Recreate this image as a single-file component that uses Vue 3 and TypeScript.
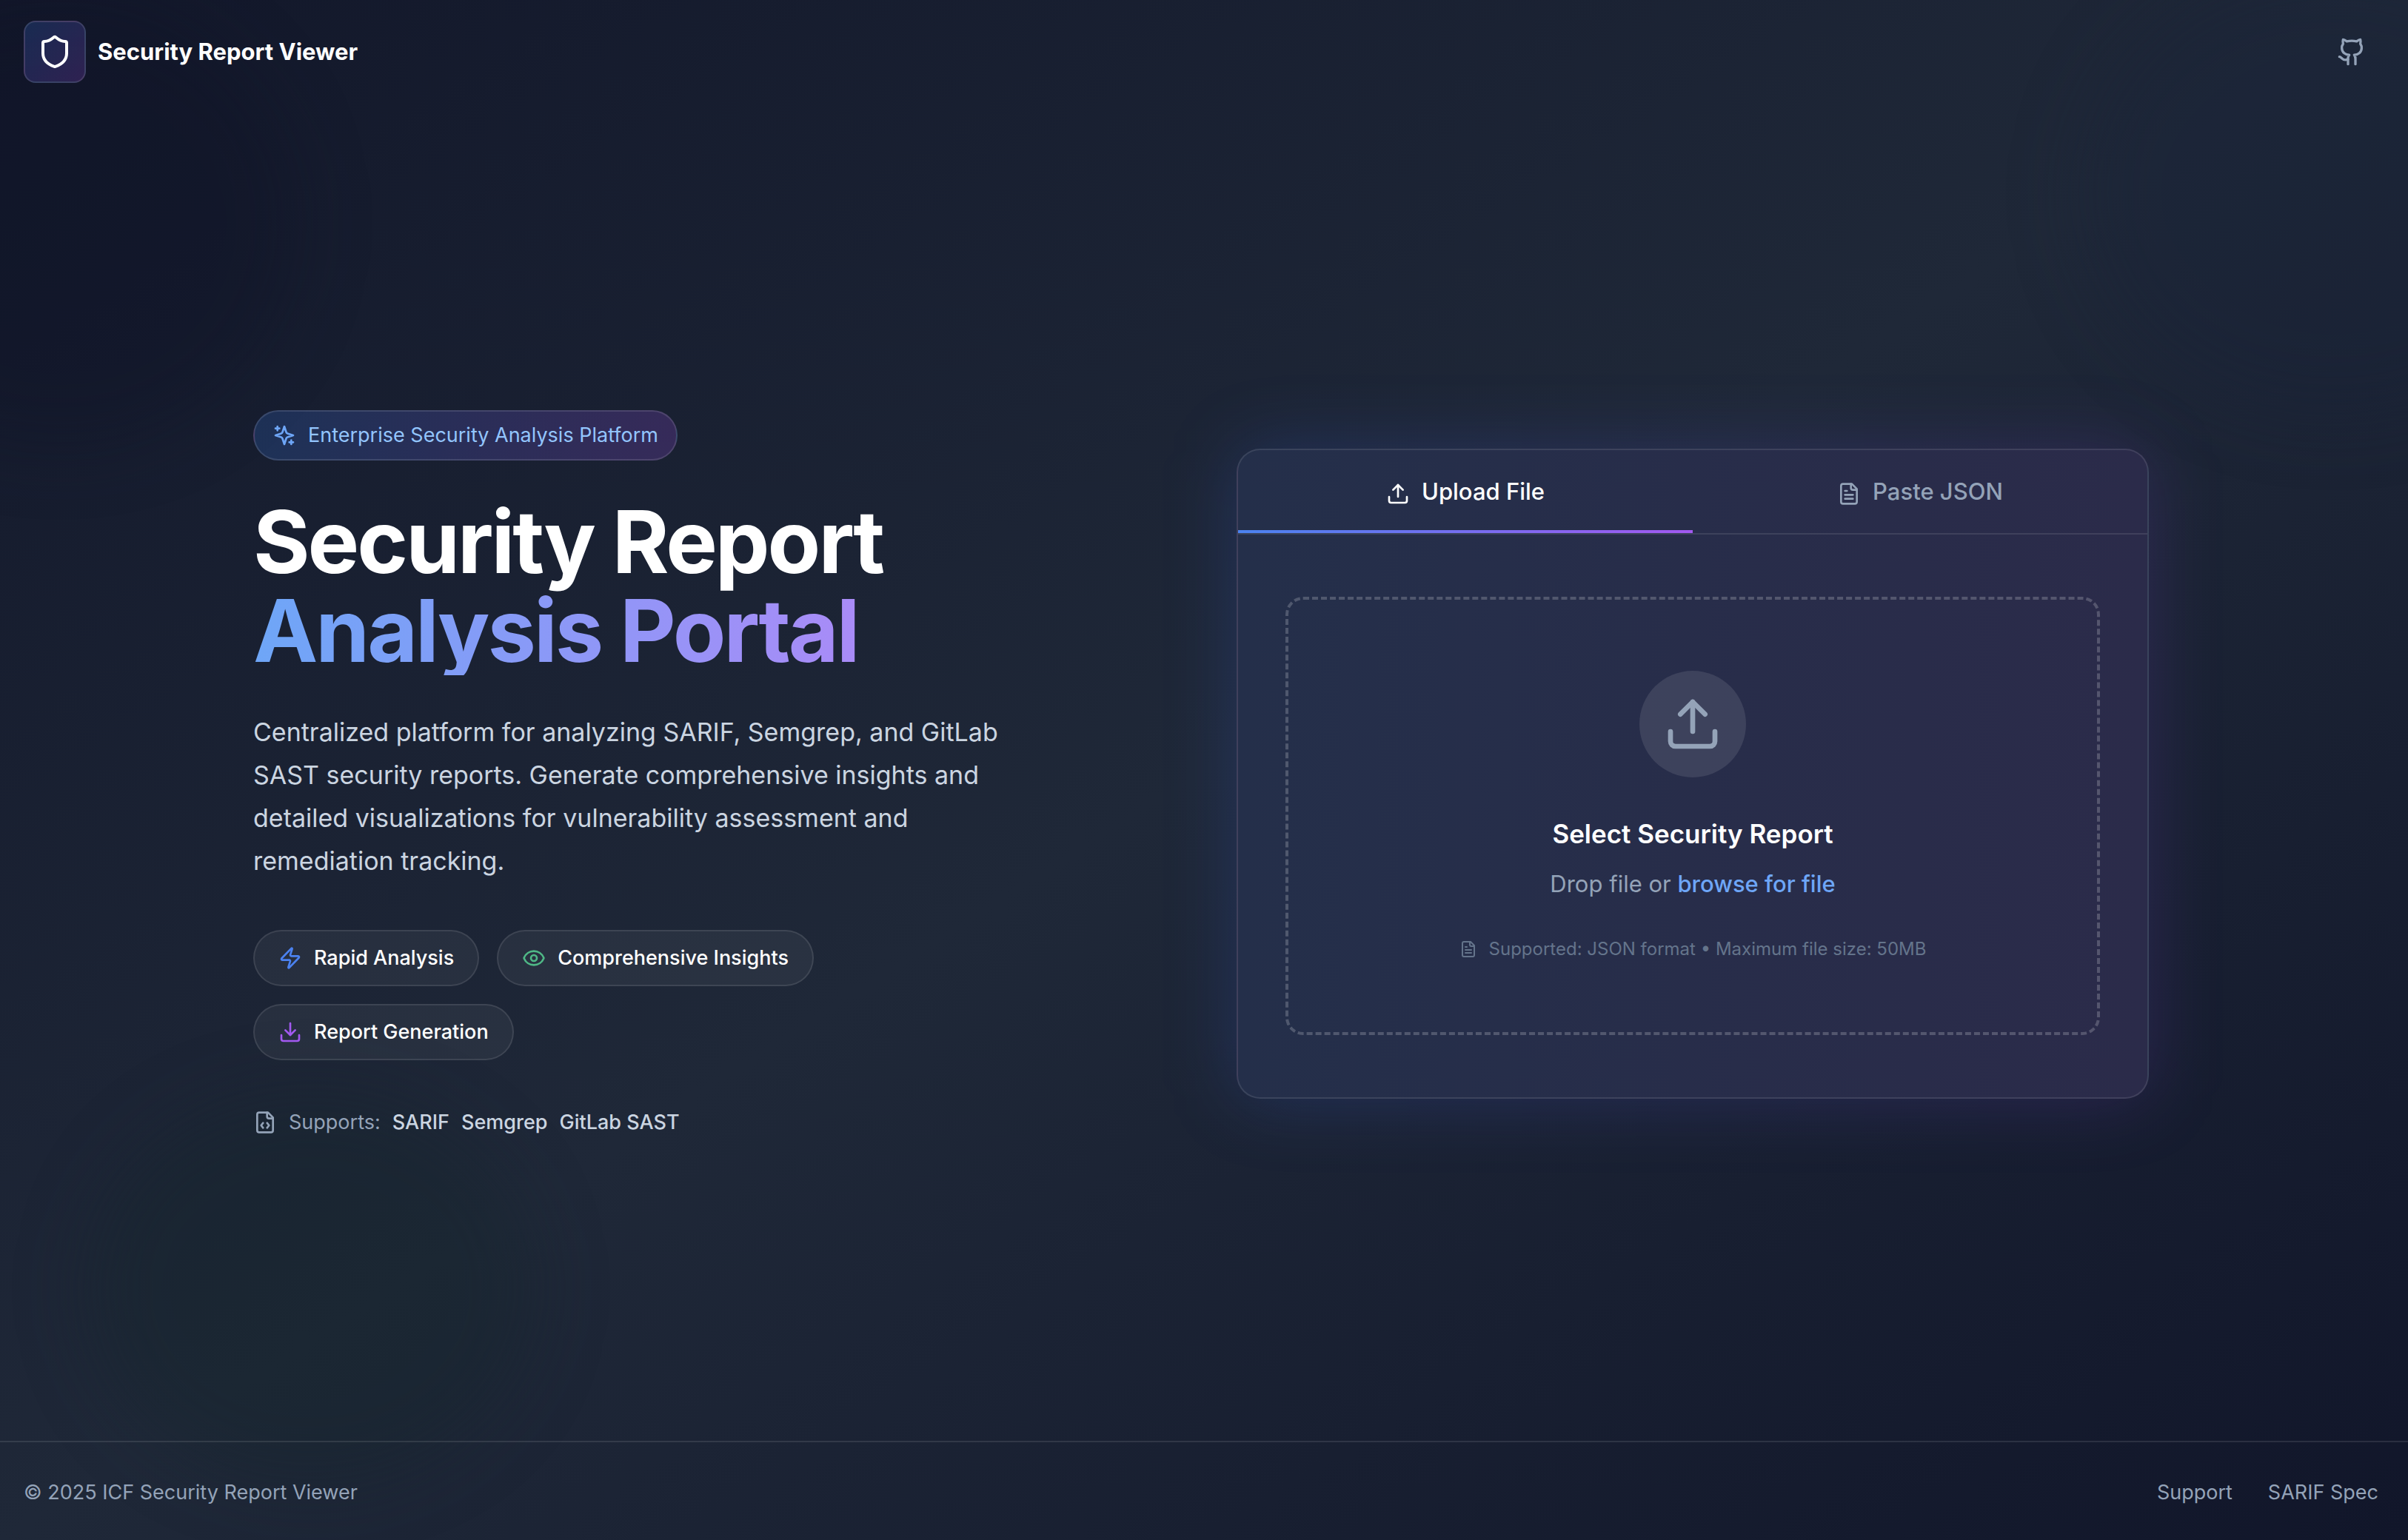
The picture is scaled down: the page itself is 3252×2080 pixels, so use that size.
<script setup lang="ts">
import { ref } from 'vue'

type TabId = 'upload' | 'paste'

interface Tab {
  id: TabId
  label: string
  icon: string[]
}

interface Feature {
  label: string
  tone: string
  icon: string[]
}

const uploadIcon = ['M12 3v12', 'm17 8-5-5-5 5', 'M21 15v4a2 2 0 0 1-2 2H5a2 2 0 0 1-2-2v-4']
const fileTextIcon = [
  'M15 2H6a2 2 0 0 0-2 2v16a2 2 0 0 0 2 2h12a2 2 0 0 0 2-2V7Z',
  'M14 2v4a2 2 0 0 0 2 2h4',
  'M10 9H8',
  'M16 13H8',
  'M16 17H8',
]

const tabs: Tab[] = [
  { id: 'upload', label: 'Upload File', icon: uploadIcon },
  { id: 'paste', label: 'Paste JSON', icon: fileTextIcon },
]

const features: Feature[] = [
  {
    label: 'Rapid Analysis',
    tone: 'blue',
    icon: [
      'M4 14a1 1 0 0 1-.78-1.63l9.9-10.2a.5.5 0 0 1 .86.46l-1.92 6.02A1 1 0 0 0 13 10h7a1 1 0 0 1 .78 1.63l-9.9 10.2a.5.5 0 0 1-.86-.46l1.92-6.02A1 1 0 0 0 11 14z',
    ],
  },
  {
    label: 'Comprehensive Insights',
    tone: 'green',
    icon: [
      'M2.062 12.348a1 1 0 0 1 0-.696 10.75 10.75 0 0 1 19.876 0 1 1 0 0 1 0 .696 10.75 10.75 0 0 1-19.876 0',
      'M15 12a3 3 0 1 1-6 0 3 3 0 0 1 6 0Z',
    ],
  },
  {
    label: 'Report Generation',
    tone: 'purple',
    icon: ['M12 15V3', 'm7 10 5 5 5-5', 'M21 15v4a2 2 0 0 1-2 2H5a2 2 0 0 1-2-2v-4'],
  },
]

const formats: string[] = ['SARIF', 'Semgrep', 'GitLab SAST']

const activeTab = ref<TabId>('upload')
</script>

<template>
  <div class="page">
    <div class="orb orb-navy"></div>
    <div class="orb orb-blue"></div>
    <div class="orb orb-green"></div>

    <header class="header">
      <div class="brand">
        <span class="brand-mark">
          <svg class="icon icon-lg" viewBox="0 0 24 24" aria-hidden="true">
            <path d="M20 13c0 5-3.5 7.5-7.66 8.95a1 1 0 0 1-.67-.01C7.5 20.5 4 18 4 13V6a1 1 0 0 1 1-1c2 0 4.5-1.2 6.24-2.72a1.17 1.17 0 0 1 1.52 0C14.51 3.81 17 5 19 5a1 1 0 0 1 1 1z" />
          </svg>
        </span>
        <span class="brand-name">Security Report Viewer</span>
      </div>
      <a class="repo-link" href="#" aria-label="GitHub">
        <svg class="icon icon-md" viewBox="0 0 24 24" aria-hidden="true">
          <path d="M15 22v-4a4.8 4.8 0 0 0-1-3.5c3 0 6-2 6-5.5.08-1.25-.27-2.48-1-3.5.28-1.15.28-2.35 0-3.5 0 0-1 0-3 1.5-2.64-.5-5.36-.5-8 0C6 2 5 2 5 2c-.3 1.15-.3 2.35 0 3.5A5.403 5.403 0 0 0 4 9c0 3.5 3 5.5 6 5.5-.39.49-.68 1.05-.85 1.65-.17.6-.22 1.23-.15 1.85v4" />
          <path d="M9 18c-4.51 2-5-2-7-2" />
        </svg>
      </a>
    </header>

    <main class="main">
      <div class="columns">
        <section class="intro">
          <div class="badge">
            <svg class="icon badge-icon" viewBox="0 0 24 24" aria-hidden="true">
              <path d="m12 3-1.912 5.813a2 2 0 0 1-1.275 1.275L3 12l5.813 1.912a2 2 0 0 1 1.275 1.275L12 21l1.912-5.813a2 2 0 0 1 1.275-1.275L21 12l-5.813-1.912a2 2 0 0 1-1.275-1.275L12 3Z" />
              <path d="M5 3v4M19 17v4M3 5h4M17 19h4" />
            </svg>
            <span>Enterprise Security Analysis Platform</span>
          </div>

          <h1 class="title">
            Security Report
            <span class="title-accent">Analysis Portal</span>
          </h1>

          <p class="lead">
            Centralized platform for analyzing SARIF, Semgrep, and GitLab SAST security reports.
            Generate comprehensive insights and detailed visualizations for vulnerability
            assessment and remediation tracking.
          </p>

          <ul class="features">
            <li v-for="feature in features" :key="feature.label" class="feature">
              <svg class="icon" :class="feature.tone" viewBox="0 0 24 24" aria-hidden="true">
                <path v-for="d in feature.icon" :key="d" :d="d" />
              </svg>
              <span>{{ feature.label }}</span>
            </li>
          </ul>

          <div class="supports">
            <svg class="icon" viewBox="0 0 24 24" aria-hidden="true">
              <path d="M10 12.5 8 15l2 2.5" />
              <path d="m14 12.5 2 2.5-2 2.5" />
              <path d="M14 2v4a2 2 0 0 0 2 2h4" />
              <path d="M15 2H6a2 2 0 0 0-2 2v16a2 2 0 0 0 2 2h12a2 2 0 0 0 2-2V7z" />
            </svg>
            <span>Supports:</span>
            <span v-for="format in formats" :key="format" class="format">{{ format }}</span>
          </div>
        </section>

        <section class="panel">
          <div class="panel-glow"></div>
          <div class="card">
            <div class="tabs" role="tablist">
              <button
                v-for="tab in tabs"
                :key="tab.id"
                type="button"
                role="tab"
                class="tab"
                :class="{ active: activeTab === tab.id }"
                :aria-selected="activeTab === tab.id"
                @click="activeTab = tab.id"
              >
                <svg class="icon tab-icon" viewBox="0 0 24 24" aria-hidden="true">
                  <path v-for="d in tab.icon" :key="d" :d="d" />
                </svg>
                <span>{{ tab.label }}</span>
              </button>
            </div>

            <div class="card-body">
              <div class="dropzone">
                <div class="drop-mark">
                  <svg class="icon icon-xl" viewBox="0 0 24 24" aria-hidden="true">
                    <path v-for="d in uploadIcon" :key="d" :d="d" />
                  </svg>
                </div>
                <h2 class="drop-title">Select Security Report</h2>
                <p class="drop-text">
                  Drop file or <label class="browse" for="report-file">browse for file</label>
                </p>
                <input id="report-file" class="file-input" type="file" accept=".json" />
                <p class="drop-hint">
                  <svg class="icon icon-sm" viewBox="0 0 24 24" aria-hidden="true">
                    <path v-for="d in fileTextIcon" :key="d" :d="d" />
                  </svg>
                  <span>Supported: JSON format • Maximum file size: 50MB</span>
                </p>
              </div>
            </div>
          </div>
        </section>
      </div>
    </main>

    <footer class="footer">
      <span>© 2025 ICF Security Report Viewer</span>
      <nav class="footer-links">
        <a href="#">Support</a>
        <a href="#">SARIF Spec</a>
      </nav>
    </footer>
  </div>
</template>

<style>
body {
  margin: 0;
  background: #111827;
}
</style>

<style scoped>
.page {
  position: relative;
  display: flex;
  flex-direction: column;
  min-height: 100vh;
  overflow: hidden;
  background: linear-gradient(to bottom right, #12172a, #1f2838, #11162a);
  color: #ffffff;
  font-family: Inter, "Liberation Sans", sans-serif;
  font-size: 27px;
  line-height: 40px;
}

.page *,
.page *::after {
  box-sizing: border-box;
}

.icon {
  width: 32px;
  height: 32px;
  flex: none;
  fill: none;
  stroke: currentColor;
  stroke-width: 2;
  stroke-linecap: round;
  stroke-linejoin: round;
}

.icon-sm {
  width: 24px;
  height: 24px;
}

.icon-md {
  width: 40px;
  height: 40px;
}

.icon-lg {
  width: 48px;
  height: 48px;
}

.icon-xl {
  width: 80px;
  height: 80px;
}

/* Soft coloured circles behind the content */
.orb {
  position: absolute;
  border-radius: 50%;
  filter: blur(48px);
}

.orb-navy {
  top: 0;
  left: -240px;
  width: 640px;
  height: 600px;
  background: rgba(12, 18, 38, 0.3);
}

.orb-blue {
  top: -40px;
  right: -240px;
  width: 680px;
  height: 600px;
  background: rgba(22, 34, 56, 0.3);
}

.orb-green {
  bottom: 80px;
  left: 120px;
  width: 600px;
  height: 520px;
  background: rgba(20, 37, 44, 0.35);
}

.header {
  position: relative;
  display: flex;
  align-items: center;
  justify-content: space-between;
  padding: 28px 40px 32px 32px;
}

.brand {
  display: flex;
  align-items: center;
  gap: 16px;
}

.brand-mark {
  display: flex;
  padding: 16px;
  border: 2px solid rgba(255, 255, 255, 0.12);
  border-radius: 16px;
  background: linear-gradient(to bottom right, rgba(59, 130, 246, 0.2), rgba(168, 85, 247, 0.2));
}

.brand-name {
  font-size: 31px;
  font-weight: 700;
}

.repo-link {
  display: flex;
  padding: 16px;
  color: #94a3b8;
}

.main {
  position: relative;
  display: flex;
  flex: 1;
  align-items: center;
  justify-content: center;
  padding: 0 40px 0 32px;
}

.columns {
  display: grid;
  grid-template-columns: 1fr 1fr;
  align-items: center;
  gap: 96px;
  width: 100%;
  max-width: 2560px;
}

.intro {
  max-width: 1040px;
}

.badge {
  display: inline-flex;
  align-items: center;
  gap: 16px;
  padding: 12px 24px;
  border: 2px solid rgba(255, 255, 255, 0.12);
  border-radius: 34px;
  background: linear-gradient(to right, rgba(59, 130, 246, 0.2), rgba(168, 85, 247, 0.2));
  color: #93c5fd;
  vertical-align: top;
}

.badge-icon {
  color: #6ea6f7;
}

.title {
  margin: 50px 0 0;
  font-size: 117px;
  font-weight: 700;
  line-height: 120px;
  letter-spacing: -3px;
}

.title-accent {
  display: block;
  width: fit-content;
  background: linear-gradient(to right, #6ea6f7, #a98bf7);
  background-clip: text;
  -webkit-background-clip: text;
  color: transparent;
}

.lead {
  margin: 48px 0 0;
  color: #cbd5e1;
  font-size: 34px;
  line-height: 58px;
}

.features {
  display: flex;
  flex-wrap: wrap;
  gap: 24px;
  margin: 64px 0 0;
  padding: 0;
  list-style: none;
}

.feature {
  display: flex;
  align-items: center;
  gap: 16px;
  padding: 16px 32px;
  border: 2px solid rgba(255, 255, 255, 0.1);
  border-radius: 38px;
  background: rgba(255, 255, 255, 0.05);
  font-weight: 500;
}

.blue {
  color: #4b82f0;
}

.green {
  color: #4fb886;
}

.purple {
  color: #a259f0;
}

.supports {
  display: flex;
  align-items: center;
  gap: 16px;
  margin-top: 64px;
  color: #94a3b8;
}

.format {
  color: #cbd5e1;
  font-weight: 500;
}

.panel {
  position: relative;
}

.panel-glow {
  position: absolute;
  inset: 0;
  border-radius: 32px;
  background: linear-gradient(to right, rgba(59, 110, 246, 0.2), rgba(130, 70, 220, 0.2));
  filter: blur(48px);
}

.card {
  position: relative;
  overflow: hidden;
  border: 2px solid rgba(255, 255, 255, 0.1);
  border-radius: 32px;
  background: linear-gradient(to right, #242f4a, #2b2b4a);
}

.tabs {
  display: flex;
  border-bottom: 2px solid rgba(255, 255, 255, 0.1);
}

.tab {
  position: relative;
  flex: 1;
  padding: 32px;
  border: 0;
  background: none;
  color: #94a3b8;
  font: inherit;
  font-size: 31px;
  font-weight: 500;
  line-height: 48px;
  cursor: pointer;
}

.tab.active {
  color: #ffffff;
}

.tab.active::after {
  content: "";
  position: absolute;
  right: 0;
  bottom: 0;
  left: 0;
  height: 4px;
  background: linear-gradient(to right, #4b83f0, #a259f0);
}

.tab-icon {
  margin-right: 16px;
  vertical-align: middle;
}

.card-body {
  padding: 84px 64px;
}

.dropzone {
  display: flex;
  flex-direction: column;
  align-items: center;
  padding: 96px;
  border: 4px dashed rgba(255, 255, 255, 0.2);
  border-radius: 24px;
  text-align: center;
}

.drop-mark {
  display: flex;
  padding: 32px;
  border-radius: 50%;
  background: rgba(255, 255, 255, 0.1);
  color: #94a3b8;
}

.drop-title {
  margin: 48px 0 0;
  font-size: 35px;
  font-weight: 600;
  line-height: 56px;
}

.drop-text {
  margin: 16px 0 0;
  color: #94a3b8;
  font-size: 31px;
  line-height: 48px;
}

.browse {
  color: #6ea6f7;
  font-weight: 500;
  cursor: pointer;
}

.file-input {
  position: absolute;
  width: 1px;
  height: 1px;
  opacity: 0;
}

.drop-hint {
  display: flex;
  align-items: center;
  gap: 16px;
  margin: 48px 0 0;
  color: #64748b;
  font-size: 24px;
  line-height: 32px;
}

.footer {
  position: relative;
  display: flex;
  align-items: center;
  justify-content: space-between;
  padding: 48px 40px 44px 32px;
  border-top: 2px solid rgba(255, 255, 255, 0.1);
  color: #94a3b8;
}

.footer-links {
  display: flex;
  gap: 48px;
}

.footer-links a {
  color: inherit;
  text-decoration: none;
}
</style>
